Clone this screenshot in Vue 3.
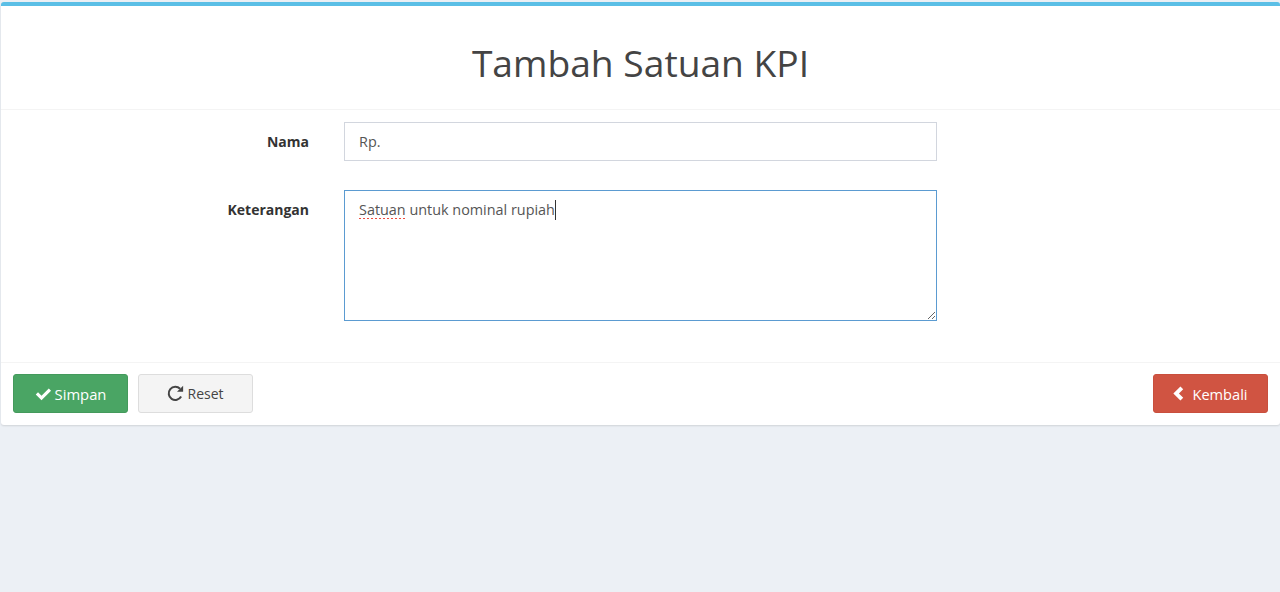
<template>
  <div class="page">
    <form class="box" @submit.prevent>
      <div class="box-header">
        <h1 class="box-title">Tambah Satuan KPI</h1>
      </div>
      <div class="box-body">
        <div class="form-row">
          <label class="form-label">Nama</label>
          <div class="form-field">
            <input v-model="nama" class="form-input" type="text" />
          </div>
        </div>
        <div class="form-row">
          <label class="form-label">Keterangan</label>
          <div class="form-field">
            <div class="form-area"><span class="misspelled">Satuan</span> untuk nominal rupiah<span class="caret"></span></div>
          </div>
        </div>
      </div>
      <div class="box-footer">
        <button class="btn btn-success" type="submit">
          <svg class="icon icon-check" viewBox="0 0 18 14" aria-hidden="true">
            <path d="M0.8 7.6 3.2 5.2 6.9 8.9 14.6 1.2 17 3.6 6.9 13.7Z" fill="currentColor" />
          </svg>
          <span>Simpan</span>
        </button>
        <button class="btn btn-default" type="reset">
          <svg class="icon icon-reset" viewBox="0 0 16 16" aria-hidden="true">
            <path d="M13.3 10.9A6.2 6.2 0 1 1 12.3 3.6" fill="none" stroke="currentColor" stroke-width="1.9" />
            <path d="M15.2 0.6V6.4H9.4Z" fill="currentColor" />
          </svg>
          <span>Reset</span>
        </button>
        <button class="btn btn-danger" type="button">
          <svg class="icon icon-back" viewBox="0 0 10 14" aria-hidden="true">
            <path d="M6.8 0.4 9.4 3 5.4 7 9.4 11 6.8 13.6 0.2 7Z" fill="currentColor" />
          </svg>
          <span>Kembali</span>
        </button>
      </div>
    </form>
  </div>
</template>

<script setup>
import { ref } from 'vue'

const nama = ref('Rp.')
</script>

<style>
html,
body {
  margin: 0;
  background: #ecf0f5;
}
</style>

<style scoped>
.page {
  min-height: 592px;
  padding-top: 2px;
  box-sizing: border-box;
  background: #ecf0f5;
  font-family: "Open Sans", "Noto Sans", sans-serif;
  color: #444;
}

.box {
  background: #fff;
  border-top: 4px solid #5bbfe6;
  border-radius: 3px;
  box-shadow: 0 1px 2px rgba(0, 0, 0, 0.12);
  margin: 0 0 0 1px;
}

.box-header {
  height: 104px;
  padding-top: 10px;
  display: flex;
  align-items: center;
  justify-content: center;
  border-bottom: 1px solid #f4f4f4;
  box-sizing: border-box;
}

.box-title {
  margin: 0;
  font-size: 37.2px;
  font-weight: 400;
  color: #444;
}

.box-body {
  padding: 12px 0 41px;
}

.form-row {
  display: flex;
  gap: 35px;
}

.form-row + .form-row {
  margin-top: 28px;
}

.form-label {
  width: 308px;
  text-align: right;
  font-size: 14px;
  font-weight: 700;
  color: #333;
  line-height: 40px;
}

.form-field {
  width: 593px;
}

.form-input,
.form-area {
  display: block;
  width: 100%;
  box-sizing: border-box;
  font: inherit;
  font-size: 14.4px;
  color: #555;
  padding: 0 14px;
  outline: none;
  border-radius: 0;
}

.form-input {
  height: 39px;
  border: 1px solid #d2d6de;
  background: #fff;
}

.form-area {
  height: 131px;
  border: 1px solid #5b9bd1;
  padding-top: 9px;
  line-height: 20px;
  overflow: auto;
  resize: both;
}

.misspelled {
  background: repeating-linear-gradient(90deg, #ee4b3e 0 2px, transparent 2px 4px) left bottom / 100% 1px no-repeat;
}

.caret {
  display: inline-block;
  width: 1px;
  height: 20px;
  background: #333;
  vertical-align: top;
}

.box-footer {
  display: flex;
  gap: 10px;
  padding: 11px 12px 12px 12px;
  border-top: 1px solid #f4f4f4;
}

.btn {
  height: 39px;
  width: 115px;
  display: flex;
  align-items: center;
  justify-content: center;
  gap: 3px;
  border-radius: 3px;
  border: 1px solid transparent;
  font: inherit;
  font-size: 14px;
  box-sizing: border-box;
}

.btn-success {
  background: #4aa564;
  border-color: #449a5c;
  color: #fff;
  font-size: 14.8px;
}

.btn-default {
  background: #f4f4f4;
  border-color: #ddd;
  color: #444;
}

.btn-danger {
  margin-left: auto;
  background: #d05442;
  border-color: #c94f3d;
  color: #fff;
  gap: 8px;
  font-size: 14.6px;
}

.icon-check {
  width: 17px;
  height: 14px;
}

.icon-reset {
  width: 17px;
  height: 17px;
}

.icon-back {
  width: 11px;
  height: 15px;
}
</style>
